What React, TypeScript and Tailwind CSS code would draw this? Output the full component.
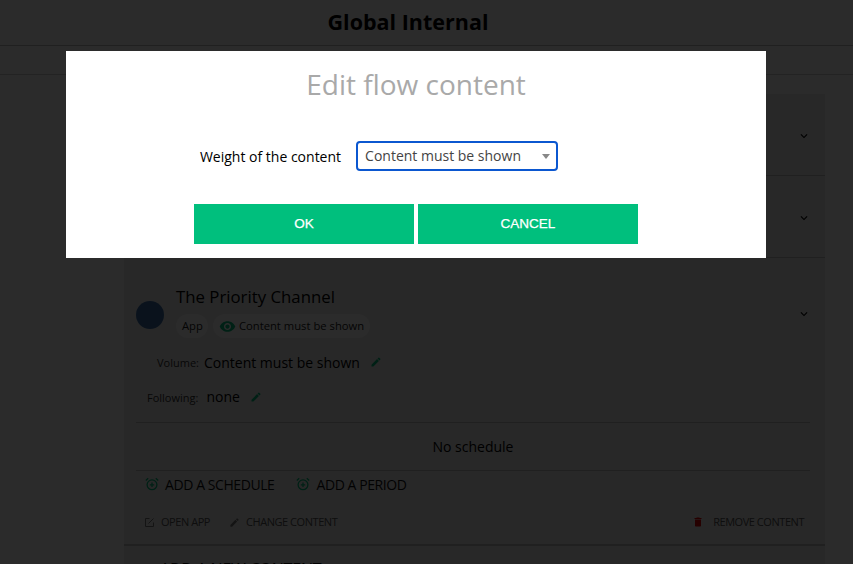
import { MdExpandMore, MdVisibility, MdEdit, MdDelete } from 'react-icons/md';

function AlarmAdd() {
  return (
    <svg width="14" height="14" viewBox="0 0 14 14" fill="none" stroke="#00bf7d" strokeWidth="1.3">
      <circle cx="7" cy="7.8" r="4.9" />
      <path d="M7 5.6v4.4M4.8 7.8h4.4M0.8 3.4 3.2 1.2M13.2 3.4 10.8 1.2" />
    </svg>
  );
}

function OpenApp() {
  return (
    <svg width="11" height="11" viewBox="0 0 11 11" fill="none" stroke="#777" strokeWidth="1">
      <path d="M9.5 5.5v4h-8v-8h4M4.5 6.5l5-5" />
    </svg>
  );
}

function CollapsedRow() {
  return (
    <div className="flex h-[82px] items-center justify-end border-b border-[#bbb] pr-[14px] pt-[2px]">
      <MdExpandMore size={14} className="text-black" />
    </div>
  );
}

function Schedule({ label }: { label: string }) {
  return (
    <span className="flex items-center gap-[6px]">
      <AlarmAdd />
      <span className="text-[14px] tracking-[-0.42px] text-[#111]">{label}</span>
    </span>
  );
}

export default function App() {
  return (
    <div className="relative h-[564px] w-[853px] overflow-hidden bg-white font-['Open_Sans',sans-serif]">
      {/* Page behind the modal */}
      <header className="flex h-[46px] items-center justify-center border-b border-[#bbb] pr-[37px]">
        <h1 className="text-[21.5px] font-bold text-black">Global Internal</h1>
      </header>
      <div className="h-[29px] border-b border-[#ccc]" />

      <main className="ml-[124px] mt-[19px] w-[701px] bg-[#ececec]">
        <CollapsedRow />
        <CollapsedRow />

        {/* Expanded content */}
        <section className="relative h-[288px] border-b-2 border-[#bbb] pl-[12px] pr-[15px] pt-[27px]">
          <MdExpandMore size={14} className="absolute right-[14px] top-[49px] text-black" />
          <div className="flex items-center gap-[12px]">
            <div className="mt-[7px] h-[28px] w-[28px] rounded-full bg-[#3b6ea8]" />
            <div>
              <div className="text-[16.8px] leading-[24px] text-black">The Priority Channel</div>
              <div className="mt-[5px] flex gap-[5px]">
                <span className="flex h-[24px] items-center rounded-full bg-white pl-[6px] pr-[5px] text-[11.25px] text-[#222]">App</span>
                <span className="flex h-[24px] items-center gap-[3px] rounded-full bg-white px-[6px] text-[11.25px] text-[#222]">
                  <MdVisibility size={17} className="text-[#00bf7d]" />
                  Content must be shown
                </span>
              </div>
            </div>
          </div>

          <div className="mt-[14px] flex h-[20px] items-center pl-[21px]">
            <span className="mr-[5px] mt-[2px] text-[11px] text-[#333]">Volume:</span>
            <span className="text-[14px] text-black">Content must be shown</span>
            <MdEdit size={12} className="ml-[10px] text-[#00bf7d]" />
          </div>
          <div className="mt-[15px] flex h-[20px] items-center pl-[11px]">
            <span className="mr-[8px] mt-[2px] text-[11px] text-[#333]">Following:</span>
            <span className="-mt-[1px] text-[14px] text-black">none</span>
            <MdEdit size={12} className="ml-[10px] text-[#00bf7d]" />
          </div>

          <div className="mt-[15px] flex h-[49px] items-center justify-center border-y border-[#bbb] text-[14px] text-black">
            No schedule
          </div>

          <div className="mt-[1px] flex h-[24px] items-center gap-[22px] pl-[9px]">
            <Schedule label="ADD A SCHEDULE" />
            <Schedule label="ADD A PERIOD" />
          </div>

          <div className="mt-[14px] flex h-[24px] items-center justify-between pl-[8px] pr-[6px] text-[11px] tracking-[-0.45px] text-[#555]">
            <div className="flex items-center gap-[19px]">
              <span className="flex items-center gap-[6px]">
                <OpenApp />
                OPEN APP
              </span>
              <span className="flex items-center gap-[6px]">
                <MdEdit size={11} className="text-[#777]" />
                CHANGE CONTENT
              </span>
            </div>
            <span className="flex items-center gap-[9px]">
              <MdDelete size={12} className="text-[#e00000]" />
              REMOVE CONTENT
            </span>
          </div>
        </section>

        <div className="pl-[36px] pt-[11px] text-[16px] tracking-[-0.2px] text-black">ADD A NEW CONTENT</div>
      </main>

      {/* Dimming layer */}
      <div className="absolute inset-0 bg-black/[.83]" />

      {/* Modal */}
      <div className="absolute left-[66px] top-[51px] flex h-[207px] w-[700px] flex-col items-center bg-white pt-[13px]">
        <h2 className="text-[28px] leading-[40px] text-[#a9a9a9]">Edit flow content</h2>
        <div className="mt-[37px] flex h-[30px] items-center gap-[15px] pr-[74px]">
          <label className="mt-[1px] text-[14px] text-black">Weight of the content</label>
          <div className="flex h-[30px] w-[202px] items-center justify-between rounded-[4px] border-2 border-[#0b57d0] pl-[7px] pr-[5px] text-[14px] text-[#444]">
            <span className="-mt-[1px]">Content must be shown</span>
            <span className="mr-[1px] h-0 w-0 border-x-[4px] border-t-[5px] border-x-transparent border-t-[#888]" />
          </div>
        </div>
        <div className="mt-[33px] flex gap-[4px] font-['Liberation_Sans',sans-serif] text-[13.5px] text-white [-webkit-text-stroke:0.25px_white]">
          <button className="h-[40px] w-[220px] bg-[#00bf7d] pt-[1px]">OK</button>
          <button className="h-[40px] w-[220px] bg-[#00bf7d] pt-[1px]">CANCEL</button>
        </div>
      </div>
    </div>
  );
}
